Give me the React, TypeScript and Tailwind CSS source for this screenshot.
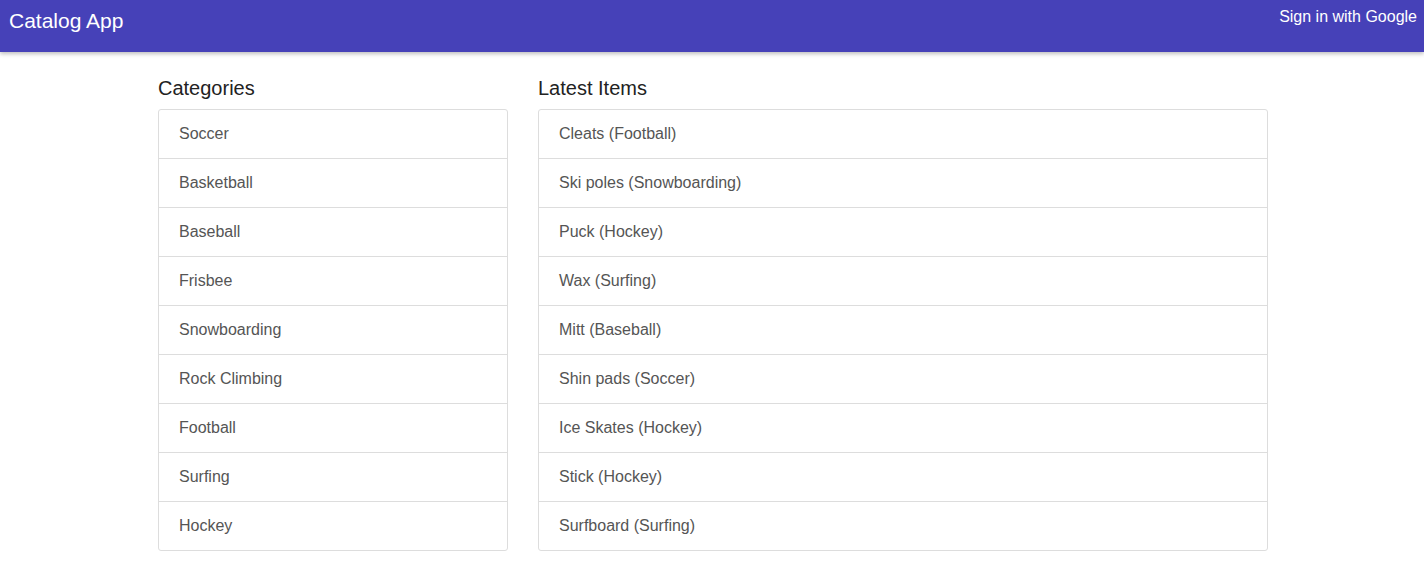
import React from "react";

const categories = [
  "Soccer",
  "Basketball",
  "Baseball",
  "Frisbee",
  "Snowboarding",
  "Rock Climbing",
  "Football",
  "Surfing",
  "Hockey",
];

const items = [
  "Cleats (Football)",
  "Ski poles (Snowboarding)",
  "Puck (Hockey)",
  "Wax (Surfing)",
  "Mitt (Baseball)",
  "Shin pads (Soccer)",
  "Ice Skates (Hockey)",
  "Stick (Hockey)",
  "Surfboard (Surfing)",
];

function List({ title, entries, width }: { title: string; entries: string[]; width: string }) {
  return (
    <div className={width}>
      <h3 className="text-[20px] leading-[22px] text-[#222] mb-[10px]">{title}</h3>
      <div className="border border-[#ddd] rounded-[3px]">
        {entries.map((e, i) => (
          <div
            key={e}
            className={`h-[48px] flex items-center pl-[20px] text-[16px] text-[#555] ${i > 0 ? "border-t border-[#ddd] h-[49px]" : ""}`}
          >
            {e}
          </div>
        ))}
      </div>
    </div>
  );
}

export default function App() {
  return (
    <div className="min-h-[573px] bg-white" style={{ fontFamily: '"Liberation Sans", Arial, sans-serif' }}>
      <header className="h-[52px] bg-[#4641b8] flex justify-between items-start shadow-[0_2px_4px_rgba(0,0,0,0.25)] relative">
        <div className="text-white text-[21px] leading-[28px] pt-[7px] pl-[9px]">Catalog App</div>
        <div className="text-white text-[16px] leading-[20px] pt-[7px] pr-[7px]">Sign in with Google</div>
      </header>
      <main className="flex gap-[30px] pl-[158px] pt-[25px]">
        <List title="Categories" entries={categories} width="w-[350px]" />
        <List title="Latest Items" entries={items} width="w-[730px]" />
      </main>
    </div>
  );
}
